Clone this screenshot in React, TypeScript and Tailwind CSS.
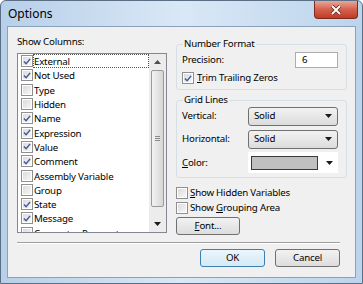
import React from 'react';

const columns: { label: string; checked: boolean }[] = [
  { label: 'External', checked: true },
  { label: 'Not Used', checked: true },
  { label: 'Type', checked: false },
  { label: 'Hidden', checked: false },
  { label: 'Name', checked: true },
  { label: 'Expression', checked: true },
  { label: 'Value', checked: true },
  { label: 'Comment', checked: true },
  { label: 'Assembly Variable', checked: false },
  { label: 'Group', checked: false },
  { label: 'State', checked: true },
  { label: 'Message', checked: true },
  { label: 'Connector Parameters', checked: false },
];

const CheckBox = ({ checked }: { checked: boolean }) => (
  <div className="w-[12px] h-[12px] shrink-0 border border-[#8f8f8f] bg-white p-[1px]">
    <div className="w-full h-full bg-linear-to-br from-[#dcdcdc] to-[#f6f6f6] flex items-center justify-center">
      {checked && (
        <svg width="9" height="9" viewBox="0 0 9 9">
          <path d="M1 4.5 L3.5 7 L8 1.5" fill="none" stroke="#3c5a9a" strokeWidth="1.6" />
        </svg>
      )}
    </div>
  </div>
);

const DropArrow = () => (
  <svg width="7" height="4" viewBox="0 0 7 4">
    <path d="M0 0 H7 L3.5 4 Z" fill="#1a1a1a" />
  </svg>
);

const Select = ({ value }: { value: string }) => (
  <div className="w-[90px] h-[19px] rounded-[3px] border border-[#707070] bg-linear-to-b from-[#f2f2f2] to-[#dcdcdc] flex items-center px-[5px]">
    <span className="flex-1">{value}</span>
    <DropArrow />
  </div>
);

const Button = ({ label, isDefault, className = '' }: { label: React.ReactNode; isDefault?: boolean; className?: string }) => (
  <div
    className={`h-[18px] rounded-[3px] border flex items-center justify-center bg-linear-to-b ${
      isDefault ? 'border-[#3c7fb1] from-[#eaf6fd] to-[#d5e9f5]' : 'border-[#707070] from-[#f2f2f2] to-[#dddddd]'
    } ${className}`}
  >
    {label}
  </div>
);

export default function App() {
  return (
    <div
      className="w-[363px] h-[284px] rounded-t-[6px] border border-[#5a6f86] bg-linear-to-r from-[#b7cfe9] via-[#d9e8f6] to-[#bcd4ec] text-[9.7px] tracking-[-0.2px] text-black flex flex-col"
      style={{ fontFamily: '"Noto Sans", sans-serif' }}
    >
      {/* title bar */}
      <div className="h-[25px] flex items-start">
        <span className="ml-[7px] mt-[6px] text-[12px] tracking-normal leading-[14px]">Options</span>
        <div className="ml-auto mr-[4px] w-[44px] h-[18px] rounded-b-[4px] border border-t-0 border-[#7a2b22] bg-linear-to-b from-[#e9a597] via-[#d3604c] to-[#c23a22] flex items-center justify-center">
          <svg width="12" height="10" viewBox="0 0 12 10">
            <path d="M2 1 L10 9 M10 1 L2 9" stroke="#5a1c14" strokeWidth="3.4" />
            <path d="M2 1 L10 9 M10 1 L2 9" stroke="#ffffff" strokeWidth="2" />
          </svg>
        </div>
      </div>

      {/* client area */}
      <div className="mx-[6px] h-[252px] border border-[#8aa1bb] bg-[#f0f0f0] flex flex-col leading-[14px]">
        <div className="flex pt-[8px]">
          {/* left column */}
          <div className="ml-[9px] w-[150px] flex flex-col">
            <div className="h-[18px]">Show Columns:</div>
            <div className="h-[180px] border border-[#828790] bg-white flex overflow-hidden">
              <div className="flex-1 flex flex-col overflow-hidden">
                {columns.map((c, i) => (
                  <div key={c.label} className="h-[14.3px] shrink-0 flex items-center pl-[3px]">
                    <CheckBox checked={c.checked} />
                    <span
                      className={`h-[14px] leading-[13px] whitespace-nowrap ${
                        i === 0 ? 'flex-1 border border-dotted border-[#555]' : 'border border-transparent'
                      }`}
                    >
                      {c.label}
                    </span>
                  </div>
                ))}
              </div>
              {/* scrollbar */}
              <div className="w-[17px] shrink-0 bg-[#ececec] flex flex-col items-center">
                <div className="h-[16px] flex items-center justify-center">
                  <svg width="7" height="4" viewBox="0 0 7 4">
                    <path d="M0 4 H7 L3.5 0 Z" fill="#4d4d4d" />
                  </svg>
                </div>
                <div className="w-[13px] h-[137px] rounded-[2px] border border-[#9a9a9a] bg-linear-to-r from-[#f3f3f3] to-[#d6d6d6] flex flex-col items-center justify-center gap-[1px]">
                  <div className="w-[5px] h-[1px] bg-[#8a8a8a]" />
                  <div className="w-[5px] h-[1px] bg-[#8a8a8a]" />
                  <div className="w-[5px] h-[1px] bg-[#8a8a8a]" />
                </div>
                <div className="flex-1" />
                <div className="h-[16px] flex items-center justify-center">
                  <DropArrow />
                </div>
              </div>
            </div>
          </div>

          {/* right column */}
          <div className="ml-[9px] w-[171px] flex flex-col">
            <fieldset className="mt-[2px] border border-[#d5dfe5] rounded-[3px] px-[5px] pb-[4px]">
              <legend className="px-[1px] ml-[1px] leading-[14px]">Number Format</legend>
              <div className="h-[17px] flex items-center">
                <span className="flex-1">Precision:</span>
                <div className="w-[43px] h-[16px] mr-[3px] border border-[#abadb3] bg-white flex items-center px-[6px]">6</div>
              </div>
              <div className="mt-[3px] h-[14px] flex items-center gap-[3px]">
                <CheckBox checked />
                <span>
                  <u>T</u>rim Trailing Zeros
                </span>
              </div>
            </fieldset>

            <fieldset className="mt-[4px] border border-[#d5dfe5] rounded-[3px] px-[5px] pb-[4px]">
              <legend className="px-[1px] ml-[1px] leading-[12px]">Grid Lines</legend>
              <div className="h-[20px] flex items-center">
                <span className="flex-1">Vertical:</span>
                <div className="mr-[3px]">
                  <Select value="Solid" />
                </div>
              </div>
              <div className="mt-[3px] h-[20px] flex items-center">
                <span className="flex-1">Horizontal:</span>
                <div className="mr-[3px]">
                  <Select value="Solid" />
                </div>
              </div>
              <div className="mt-[3px] h-[21px] flex items-center">
                <span className="flex-1">
                  <u>C</u>olor:
                </span>
                <div className="mr-[3px] w-[90px] h-[21px] bg-white flex items-center pl-[3px] pr-[5px]">
                  <div className="w-[67px] h-[14px] border border-[#3a3a3a] bg-[#c0c0c0]" />
                  <div className="flex-1" />
                  <DropArrow />
                </div>
              </div>
            </fieldset>

            <div className="mt-[8px] h-[14px] flex items-center gap-[2px]">
              <CheckBox checked={false} />
              <span>
                <u>S</u>how Hidden Variables
              </span>
            </div>
            <div className="mt-[1px] h-[14px] flex items-center gap-[2px]">
              <CheckBox checked={false} />
              <span>
                Show <u>G</u>rouping Area
              </span>
            </div>
            <Button
              className="mt-[2px] w-[64px] h-[17px]"
              label={
                <span>
                  <u>F</u>ont...
                </span>
              }
            />
          </div>
        </div>

        {/* separator */}
        <div className="mt-[7px] ml-[9px] w-[323px] h-[2px] border-t border-b border-t-[#a0a0a0] border-b-white" />

        {/* buttons */}
        <div className="mt-[5px] flex justify-end gap-[10px] pr-[15px]">
          <Button label="OK" isDefault className="w-[65px]" />
          <Button label="Cancel" className="w-[65px]" />
        </div>
      </div>
    </div>
  );
}
